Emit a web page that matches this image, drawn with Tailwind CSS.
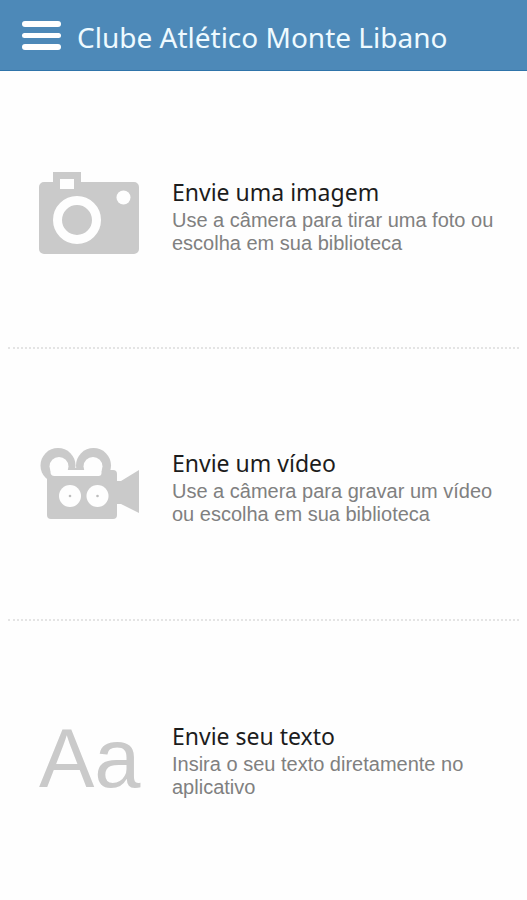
<!DOCTYPE html>
<html lang="pt-BR">
<head>
    <meta charset="UTF-8">
    <meta name="viewport" content="width=device-width, initial-scale=1.0">
    <title>Clube Atlético Monte Libano</title>
    <script src="https://cdn.jsdelivr.net/npm/@tailwindcss/browser@4"></script>
</head>
<body class="bg-[#fefefe] min-h-screen flex flex-col font-['Noto_Sans','Open_Sans',sans-serif]">
    <header class="bg-[#4d89b8] border-b border-[#2f74aa] h-[71px] pl-[22px] pr-4 flex items-center gap-4 shrink-0">
        <button type="button" aria-label="Menu" class="flex flex-col gap-[6px]">
            <span class="block w-[39px] h-[6px] rounded-sm bg-white"></span>
            <span class="block w-[39px] h-[5px] rounded-sm bg-white"></span>
            <span class="block w-[39px] h-[6px] rounded-sm bg-white"></span>
        </button>
        <h1 class="text-[28px] leading-9 pt-1 text-[#eefaff] whitespace-nowrap">Clube Atlético Monte Libano</h1>
    </header>

    <main class="flex-1 flex flex-col px-2 pt-[7px] pb-[5px]">
        <!-- Imagem -->
        <a href="#imagem" class="flex-1 flex items-center gap-[33px] pl-[31px] pr-5 border-b-2 border-dotted border-[#e4e4e4]">
            <svg class="w-[100px] h-[82px] shrink-0" viewBox="0 0 100 82" aria-hidden="true">
                <path fill="#cacaca" fill-rule="evenodd" d="M14 10V0h28v10h53a5 5 0 0 1 5 5v62a5 5 0 0 1-5 5H5a5 5 0 0 1-5-5V15a5 5 0 0 1 5-5zM21 7v10h14V7z"/>
                <circle cx="38" cy="48" r="19.500" fill="none" stroke="#fefefe" stroke-width="9"/>
                <circle cx="84.500" cy="25.500" r="7" fill="#fefefe"/>
            </svg>
            <div class="pt-1">
                <h2 class="text-[23px] leading-[34px] text-[#1c1c1c]">Envie uma imagem</h2>
                <p class="text-xl leading-[23px] text-[#808080] font-['Liberation_Sans',sans-serif]">Use a câmera para tirar uma foto ou escolha em sua biblioteca</p>
            </div>
        </a>

        <!-- Vídeo -->
        <a href="#video" class="flex-1 flex items-center gap-[33px] pl-[31px] pr-5 border-b-2 border-dotted border-[#e4e4e4]">
            <svg class="w-[100px] h-[72px] shrink-0" viewBox="-2 0 100 72" aria-hidden="true">
                <g fill="#cacaca">
                    <circle cx="17" cy="17.500" r="17.500"/>
                    <circle cx="52.500" cy="17.500" r="17.500"/>
                    <path d="M6 24h62v-2h4a4 4 0 0 1 4 4v7h4l18-11v43L80 56h-4v11a4 4 0 0 1-4 4H10a4 4 0 0 1-4-4z"/>
                    <path d="M28 20h16v4H28z"/>
                </g>
                <g fill="#fefefe">
                    <circle cx="18" cy="18.500" r="9.500"/>
                    <circle cx="52" cy="18.500" r="9.500"/>
                    <path d="M9.500 22h51v3a3 3 0 0 1-3 3h-44a4 4 0 0 1-4-4z"/>
                    <circle cx="29" cy="48" r="11"/>
                    <circle cx="56.500" cy="48" r="11"/>
                </g>
                <circle cx="29" cy="48" r="1.300" fill="#bdbdbd"/>
                <circle cx="56.500" cy="48" r="1.300" fill="#bdbdbd"/>
            </svg>
            <div class="pt-1">
                <h2 class="text-[23px] leading-[34px] text-[#1c1c1c]">Envie um vídeo</h2>
                <p class="text-xl leading-[23px] text-[#808080] font-['Liberation_Sans',sans-serif]">Use a câmera para gravar um vídeo ou escolha em sua biblioteca</p>
            </div>
        </a>

        <!-- Texto -->
        <a href="#texto" class="flex-1 flex items-center gap-[33px] pl-[31px] pr-5 border-b-2 border-transparent">
            <span aria-hidden="true" class="w-[100px] pt-1 shrink-0 text-center text-[83px] leading-none text-[#cacaca] font-['Liberation_Sans',sans-serif]">Aa</span>
            <div class="pt-1">
                <h2 class="text-[23px] leading-[34px] text-[#1c1c1c]">Envie seu texto</h2>
                <p class="text-xl leading-[23px] text-[#808080] font-['Liberation_Sans',sans-serif]">Insira o seu texto diretamente no aplicativo</p>
            </div>
        </a>
    </main>
</body>
</html>
